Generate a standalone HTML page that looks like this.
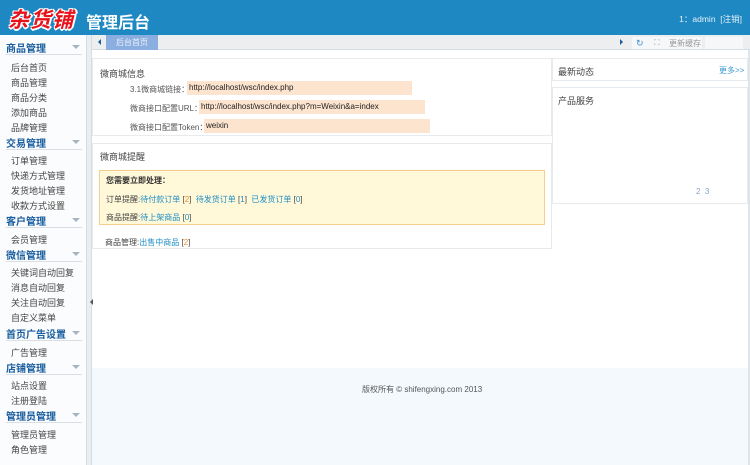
<!DOCTYPE html>
<html><head><meta charset="utf-8"><style>
*{margin:0;padding:0;box-sizing:border-box}
body{width:750px;height:465px;overflow:hidden;position:relative;background:#fff;font-family:"Liberation Sans","Noto Sans CJK SC",sans-serif;font-size:9px;color:#333}
.a{position:absolute;white-space:nowrap}
#hd{left:0;top:0;width:750px;height:35px;background:#1e88c2}
.logo{left:8px;top:4px;font-size:21px;font-weight:bold;font-style:italic;color:#e8121b;text-shadow:1px 1px 0 #fff,-1px -1px 0 #fff,1px -1px 0 #fff,-1px 1px 0 #fff,0 2px 0 #fff,2px 0 0 #fff;letter-spacing:1px}
.ttl{left:86px;top:9px;font-size:16px;color:#fff;font-weight:bold}
#sb{left:0;top:35px;width:87px;height:430px;background:#fbfcfd;border-right:1px solid #d5dde5}
.h{left:6px;font-size:10px;font-weight:bold;color:#1a5ea0;width:76px;border-bottom:1px solid #d9dfe5;height:15px}
.h:after{content:"";position:absolute;right:2px;top:5px;border:4px solid transparent;border-top:4px solid #a8b4c0}
.i{left:11px;font-size:9px;color:#444}
#split{left:87px;top:35px;width:5px;height:430px;background:#e9eef2;border-right:1px solid #d5dde5}
#tb{left:92px;top:35px;width:658px;height:15px;background:#eceef0;border-bottom:1px solid #d5dde5}
.tab{left:106px;top:35px;width:52px;height:15px;background:#8aaee0;color:#eef3fb;font-size:8px;text-align:center;line-height:15px}
.box{border:1px solid #e8ebee;background:#fff}
.f{background:#fce4cf;height:14px;font-size:8px;line-height:14px;padding-left:2px;color:#222}
.l{font-size:8px;color:#555}
.b{color:#1f8fc4}.o{color:#f08a1c}
</style></head><body>
<div class="a" id="hd"></div>
<div class="a logo">杂货铺</div>
<div class="a ttl">管理后台</div>
<div class="a" style="right:8px;top:13px;color:#e6f1f8;font-size:8.5px">1：admin &nbsp;[注销]</div>

<div class="a" id="sb"></div>
<div class="a h" style="top:40px">商品管理</div>
<div class="a i" style="top:61px">后台首页</div>
<div class="a i" style="top:76px">商品管理</div>
<div class="a i" style="top:91px">商品分类</div>
<div class="a i" style="top:106px">添加商品</div>
<div class="a i" style="top:121px">品牌管理</div>
<div class="a h" style="top:135px">交易管理</div>
<div class="a i" style="top:154px">订单管理</div>
<div class="a i" style="top:169px">快递方式管理</div>
<div class="a i" style="top:184px">发货地址管理</div>
<div class="a i" style="top:199px">收款方式设置</div>
<div class="a h" style="top:213px">客户管理</div>
<div class="a i" style="top:233px">会员管理</div>
<div class="a h" style="top:247px">微信管理</div>
<div class="a i" style="top:266px">关键词自动回复</div>
<div class="a i" style="top:281px">消息自动回复</div>
<div class="a i" style="top:296px">关注自动回复</div>
<div class="a i" style="top:311px">自定义菜单</div>
<div class="a h" style="top:326px">首页广告设置</div>
<div class="a i" style="top:346px">广告管理</div>
<div class="a h" style="top:360px">店铺管理</div>
<div class="a i" style="top:379px">站点设置</div>
<div class="a i" style="top:394px">注册登陆</div>
<div class="a h" style="top:408px">管理员管理</div>
<div class="a i" style="top:428px">管理员管理</div>
<div class="a i" style="top:443px">角色管理</div>

<div class="a" id="split"></div>
<div class="a" style="left:87px;top:299px;border:3px solid transparent;border-right:3px solid #555"></div>

<div class="a" id="tb"></div>
<div class="a" style="left:95px;top:39px;border:3px solid transparent;border-right:3px solid #1a5ea0"></div>
<div class="a tab">后台首页</div>
<div class="a" style="left:620px;top:39px;border:3px solid transparent;border-left:3px solid #1a5ea0"></div>
<div class="a" style="left:632px;top:37px;width:70px;height:12px;background:#f6f7f8"></div>
<div class="a" style="left:636px;top:38px;color:#3a8fd0;font-size:9px">↻</div>
<div class="a" style="left:654px;top:38px;color:#9ab;font-size:8px">⛶</div>
<div class="a" style="left:669px;top:38px;color:#999;font-size:8px">更新缓存</div>
<div class="a" style="left:705px;top:37px;width:38px;height:12px;background:#f6f7f8"></div>

<div class="a" style="left:92px;top:368px;width:656px;height:97px;background:#f4f9fd"></div>
<div class="a" style="left:748px;top:50px;width:2px;height:415px;background:#dfe4e8"></div>
<div class="a" style="left:362px;top:384px;font-size:8px;color:#555">版权所有 © shifengxing.com 2013</div>

<div class="a box" style="left:92px;top:58px;width:460px;height:78px"></div>
<div class="a" style="left:100px;top:67px;font-size:9px;color:#444">微商城信息</div>
<div class="a l" style="left:130px;top:84px">3.1微商城链接：</div>
<div class="a f" style="left:187px;top:81px;width:225px">http://localhost/wsc/index.php</div>
<div class="a l" style="left:130px;top:103px">微商接口配置URL：</div>
<div class="a f" style="left:199px;top:100px;width:226px">http://localhost/wsc/index.php?m=Weixin&amp;a=index</div>
<div class="a l" style="left:130px;top:122px">微商接口配置Token：</div>
<div class="a f" style="left:204px;top:119px;width:226px">weixin</div>

<div class="a box" style="left:92px;top:143px;width:460px;height:106px"></div>
<div class="a" style="left:100px;top:150px;font-size:9px;color:#444">微商城提醒</div>
<div class="a" style="left:99px;top:170px;width:446px;height:55px;background:#fff8d9;border:1px solid #f6cf8c"></div>
<div class="a" style="left:106px;top:175px;font-size:8px;font-weight:bold;color:#333">您需要立即处理：</div>
<div class="a l" style="left:106px;top:194px;color:#444">订单提醒:<span class="b">待付款订单</span> [<span class="o">2</span>] &nbsp;<span class="b">待发货订单</span> [<span class="b">1</span>] &nbsp;<span class="b">已发货订单</span> [<span class="b">0</span>]</div>
<div class="a l" style="left:106px;top:212px;color:#444">商品提醒:<span class="b">待上架商品</span> [<span class="b">0</span>]</div>
<div class="a l" style="left:105px;top:237px;color:#444">商品管理:<span class="b">出售中商品</span> [<span class="o">2</span>]</div>

<div class="a box" style="left:552px;top:58px;width:196px;height:23px"></div>
<div class="a" style="left:558px;top:65px;font-size:9px;color:#444">最新动态</div>
<div class="a" style="left:719px;top:65px;font-size:8px;color:#3a9ad0">更多>></div>
<div class="a box" style="left:552px;top:87px;width:196px;height:117px"></div>
<div class="a" style="left:558px;top:94px;font-size:9px;color:#444">产品服务</div>
<div class="a" style="left:696px;top:187px;font-size:8px;color:#8aa4c8">2 &nbsp;3</div>
</body></html>
